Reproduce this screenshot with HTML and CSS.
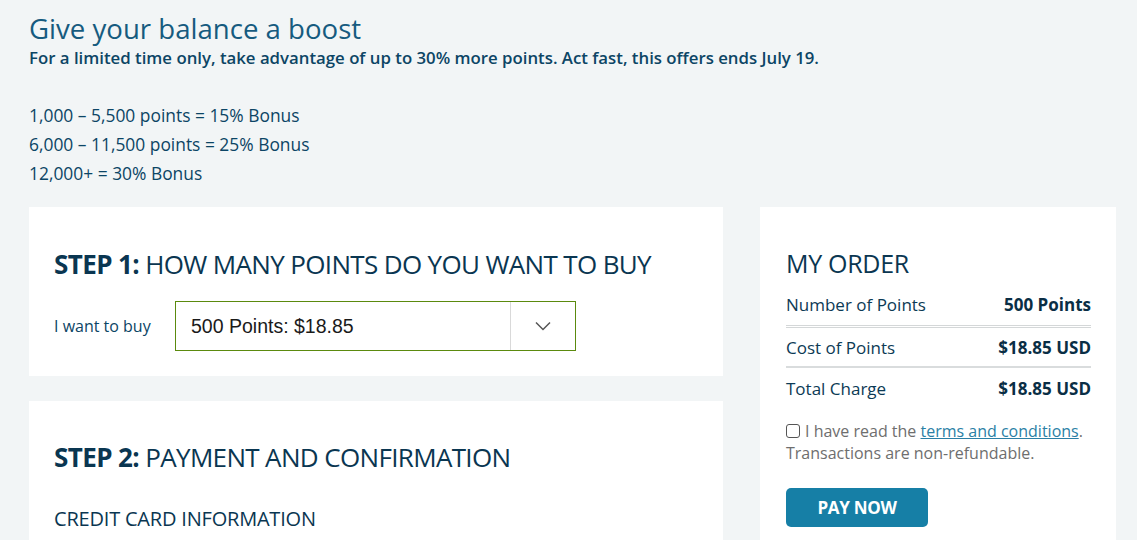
FILE: index.html
```html
<!DOCTYPE html>
<html>
<head>
<meta charset="utf-8">
<link rel="stylesheet" href="styles.css">
</head>
<body>
<div class="page">
  <header class="intro">
    <h1 class="title">Give your balance a boost</h1>
    <p class="subtitle">For a limited time only, take advantage of up to 30% more points. Act fast, this offers ends July 19.</p>
    <ul class="tiers">
      <li>1,000 – 5,500 points = 15% Bonus</li>
      <li>6,000 – 11,500 points = 25% Bonus</li>
      <li>12,000+ = 30% Bonus</li>
    </ul>
  </header>
  <div class="layout">
    <div class="main">
      <section class="card step1">
        <h2 class="step-title"><b>STEP 1:</b> HOW MANY POINTS DO YOU WANT TO BUY</h2>
        <div class="buy-row">
          <span class="buy-label">I want to buy</span>
          <div class="select">
            <span class="select-value">500 Points: $18.85</span>
            <span class="select-arrow">
              <svg width="16" height="10" viewBox="0 0 16 10"><path d="M1 1.5 L8 8.5 L15 1.5" fill="none" stroke="#555" stroke-width="1.5"/></svg>
            </span>
          </div>
        </div>
      </section>
      <section class="card step2">
        <h2 class="step-title"><b>STEP 2:</b> PAYMENT AND CONFIRMATION</h2>
        <h3 class="sub-title">CREDIT CARD INFORMATION</h3>
      </section>
    </div>
    <aside class="card order">
      <h2 class="order-title">MY ORDER</h2>
      <div class="order-row first"><span>Number of Points</span><b>500 Points</b></div>
      <div class="order-row second"><span>Cost of Points</span><b>$18.85 USD</b></div>
      <div class="order-row last"><span>Total Charge</span><b>$18.85 USD</b></div>
      <div class="terms"><span class="box"></span><p class="terms-text">I have read the <a href="#">terms and conditions</a>. Transactions are non-refundable.</p></div>
      <button class="pay">PAY NOW</button>
    </aside>
  </div>
</div>
</body>
</html>
```
FILE: styles.css
```css
* { box-sizing: border-box; }
html, body { margin: 0; padding: 0; }
body {
  background: #f2f5f6;
  font-family: "Open Sans", "Liberation Sans", sans-serif;
  color: #0d4a6b;
  width: 1137px;
  height: 540px;
  overflow: hidden;
}
.page { padding: 10px 21px 0 29px; }
.title {
  margin: 0;
  font-size: 27.6px;
  font-weight: 400;
  line-height: 36px;
  color: #165b7f;
}
.subtitle {
  margin: 0;
  font-size: 16.8px;
  font-weight: 600;
  line-height: 24px;
  color: #0c4565;
}
.tiers {
  list-style: none;
  margin: 31px 0 0;
  padding: 0;
  font-size: 17.4px;
  line-height: 29px;
  color: #0c4565;
}
.layout {
  display: flex;
  gap: 37px;
  margin-top: 19px;
  align-items: stretch;
}
.main { width: 694px; display: flex; flex-direction: column; gap: 25px; }
.card { background: #fff; }
.step1 { height: 169px; padding: 40px 25px 0; }
.step2 { padding: 39px 25px 0; height: 200px; }
.step-title {
  margin: 0;
  font-size: 26px;
  font-weight: 400;
  line-height: 34px;
  color: #0a3651;
  letter-spacing: -0.65px;
  white-space: nowrap;
}
.step-title b { font-weight: 700; letter-spacing: -0.6px; }
.buy-row { display: flex; align-items: center; margin-top: 20px; }
.buy-label { width: 121px; font-size: 16px; color: #0c4565; letter-spacing: 0; }
.select {
  width: 401px;
  height: 50px;
  border: 1px solid #5b8a0e;
  display: flex;
  align-items: center;
}
.select-value {
  flex: 1;
  padding-left: 15px;
  font-family: "Liberation Sans", Arial, sans-serif;
  font-size: 19.5px;
  color: #1a1a1a;
}
.select-arrow {
  width: 65px;
  height: 48px;
  border-left: 1px solid #d9d9d9;
  display: flex;
  align-items: center;
  justify-content: center;
}
.sub-title {
  margin: 31px 0 0;
  font-size: 20px;
  font-weight: 400;
  line-height: 28px;
  color: #0a3651;
  letter-spacing: -0.2px;
}
.order { width: 356px; padding: 39px 25px 0 26px; height: 340px; }
.order-title {
  margin: 0;
  font-size: 25px;
  font-weight: 400;
  line-height: 34px;
  color: #0a3651;
  letter-spacing: -0.3px;
}
.order-row {
  display: flex;
  justify-content: space-between;
  align-items: center;
  font-size: 17px;
  color: #0c4565;
}
.order-row.first { margin-top: 4px; height: 44px; border-bottom: 3px double #d4d7d8; }
.order-row.second { height: 40px; border-bottom: 2px solid #d9dcdd; }
.order-row.last { height: 40px; }
.order-row span { font-weight: 400; color: #0c3a55; }
.order-row b { font-weight: 700; color: #0a2e45; }
.terms {
  margin-top: 12px;
  font-size: 16px;
  line-height: 22px;
  color: #6e6e6e;
  position: relative;
}
.terms .box {
  position: absolute;
  left: 0;
  top: 4px;
  width: 14px;
  height: 14px;
  border: 1.5px solid #555;
  border-radius: 3px;
}
.terms-text { margin: 0; text-indent: 19px; }
.terms a { color: #2b7fa5; text-decoration: underline; }
.pay {
  display: block;
  margin-top: 24px;
  width: 142px;
  height: 39px;
  background: #167fa6;
  color: #fff;
  border: 0;
  border-radius: 5px;
  font-family: "Open Sans", sans-serif;
  font-size: 17px;
  font-weight: 700;
  letter-spacing: -0.3px;
}
```
